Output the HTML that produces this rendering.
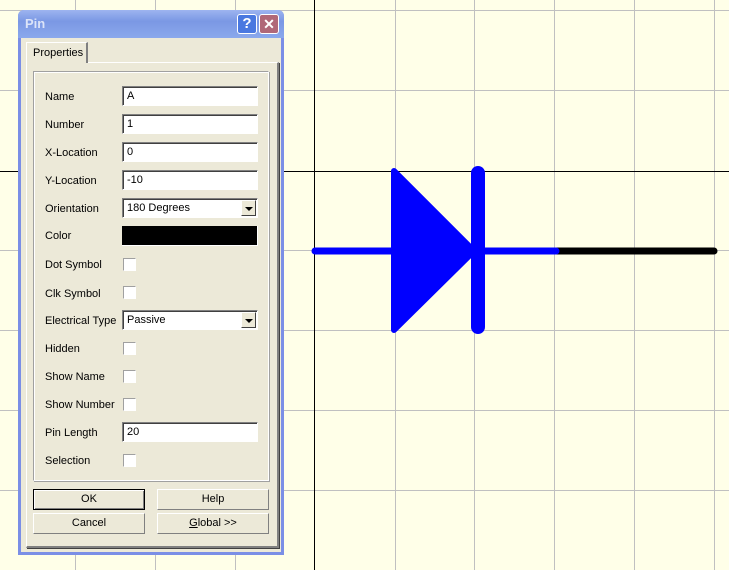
<!DOCTYPE html><html><head><style>
body{margin:0;width:729px;height:570px;overflow:hidden;background:#ffffe8;position:relative;font-family:"Liberation Sans",Arial,sans-serif;font-size:11px;color:#000}
.a{position:absolute}
.lbl{position:absolute;left:45px;font-size:11px}
.in{position:absolute;left:122px;width:134px;height:18px;background:#fff;border-top:1px solid #808080;border-left:1px solid #808080;border-right:1px solid #fff;border-bottom:1px solid #fff;box-shadow:inset 1px 1px 0 #404040}
.in span{position:absolute;left:4px;top:3px}
.cb{position:absolute;left:123px;width:11px;height:11px;background:#fff;border:1px solid #a0a0a0;border-right-color:#fff;border-bottom-color:#fff}
.dd{position:absolute;right:1px;top:1px;width:15px;height:16px;background:#ece9d8;border:1px solid #fff;border-right-color:#404040;border-bottom-color:#404040;box-sizing:border-box}
.dd:after{content:"";position:absolute;left:3px;top:6px;border-left:4px solid transparent;border-right:4px solid transparent;border-top:4px solid #000}
.btn{position:absolute;width:112px;height:21px;background:#ece9d8;border:1px solid #fff;border-right-color:#808080;border-bottom-color:#808080;text-align:center;line-height:19px;box-sizing:border-box}
</style></head><body>
<svg class="a" style="left:0;top:0" width="729" height="570">
<g stroke="#c0c0c0" stroke-width="1">
<line x1="75.5" y1="0" x2="75.5" y2="570"/><line x1="155.5" y1="0" x2="155.5" y2="570"/><line x1="235.5" y1="0" x2="235.5" y2="570"/><line x1="395.5" y1="0" x2="395.5" y2="570"/><line x1="474.5" y1="0" x2="474.5" y2="570"/><line x1="554.5" y1="0" x2="554.5" y2="570"/><line x1="634.5" y1="0" x2="634.5" y2="570"/><line x1="714.5" y1="0" x2="714.5" y2="570"/>
<line x1="0" y1="10.5" x2="729" y2="10.5"/><line x1="0" y1="90.5" x2="729" y2="90.5"/><line x1="0" y1="250.5" x2="729" y2="250.5"/><line x1="0" y1="330.5" x2="729" y2="330.5"/><line x1="0" y1="410.5" x2="729" y2="410.5"/><line x1="0" y1="490.5" x2="729" y2="490.5"/>
</g>
<line x1="314.5" y1="0" x2="314.5" y2="570" stroke="#000"/>
<line x1="0" y1="171.5" x2="729" y2="171.5" stroke="#000"/>
<line x1="556" y1="251" x2="714" y2="251" stroke="#000" stroke-width="7" stroke-linecap="round"/>
<line x1="315" y1="251" x2="556" y2="251" stroke="#00f" stroke-width="7" stroke-linecap="round"/>
<polygon points="394,171 474,251 394,330" fill="#00f" stroke="#00f" stroke-width="6" stroke-linejoin="round"/>
<line x1="478" y1="173" x2="478" y2="327" stroke="#00f" stroke-width="14" stroke-linecap="round"/>
</svg>
<div class="a" style="left:18px;top:10px;width:266px;height:545px;background:#7b8fe6;border-radius:6px 6px 0 0"></div>
<div class="a" style="left:18px;top:10px;width:266px;height:28px;background:linear-gradient(#9db4f0,#7b98e4 40%,#8aa8ec);border-radius:6px 6px 0 0"></div>
<div class="a" style="left:25px;top:16px;color:#dce4f8;font-weight:bold;font-size:13px">Pin</div>
<div class="a" style="left:237px;top:14px;width:20px;height:20px;background:#4a78e0;border:1px solid #fff;border-radius:3px;box-sizing:border-box;color:#fff;font-weight:bold;text-align:center;line-height:18px;font-size:15px">?</div>
<div class="a" style="left:259px;top:14px;width:20px;height:20px;background:#b06878;border:1px solid #fff;border-radius:3px;box-sizing:border-box;color:#fff;font-weight:bold;text-align:center;line-height:18px;font-size:14px">✕</div>
<div class="a" style="left:21px;top:38px;width:260px;height:514px;background:#ece9d8"></div>
<div class="a" style="left:26px;top:62px;width:253px;height:486px;border:1px solid #fff;border-right:2px solid #808080;border-bottom:2px solid #808080;box-sizing:border-box;box-shadow:1px 1px 0 #404040"></div>
<div class="a" style="left:26px;top:42px;width:62px;height:21px;background:#ece9d8;border:1px solid #fff;border-right:2px solid #808080;border-bottom:none;box-sizing:border-box;padding:4px 0 0 6px">Properties</div>
<div class="a" style="left:33px;top:71px;width:236px;height:410px;border:1px solid #a0a0a0;border-right-color:#fff;border-bottom-color:#fff;box-sizing:border-box;box-shadow:1px 1px 0 #a0a0a0,inset 1px 1px 0 #fff"></div>
<div class="lbl" style="top:91px">Name</div><div class="in" style="top:86px"><span>A</span></div>
<div class="lbl" style="top:119px">Number</div><div class="in" style="top:114px"><span>1</span></div>
<div class="lbl" style="top:147px">X-Location</div><div class="in" style="top:142px"><span>0</span></div>
<div class="lbl" style="top:175px">Y-Location</div><div class="in" style="top:170px"><span>-10</span></div>
<div class="lbl" style="top:203px">Orientation</div><div class="in" style="top:198px"><span>180 Degrees</span><div class="dd"></div></div>
<div class="lbl" style="top:230px">Color</div><div class="a" style="left:122px;top:226px;width:136px;height:20px;background:#000;border-bottom:1px solid #fff;border-right:1px solid #fff;box-sizing:border-box"></div>
<div class="lbl" style="top:259px">Dot Symbol</div><div class="cb" style="top:258px"></div>
<div class="lbl" style="top:288px">Clk Symbol</div><div class="cb" style="top:286px"></div>
<div class="lbl" style="top:315px">Electrical Type</div><div class="in" style="top:310px"><span>Passive</span><div class="dd"></div></div>
<div class="lbl" style="top:343px">Hidden</div><div class="cb" style="top:342px"></div>
<div class="lbl" style="top:371px">Show Name</div><div class="cb" style="top:370px"></div>
<div class="lbl" style="top:399px">Show Number</div><div class="cb" style="top:398px"></div>
<div class="lbl" style="top:427px">Pin Length</div><div class="in" style="top:422px"><span>20</span></div>
<div class="lbl" style="top:455px">Selection</div><div class="cb" style="top:454px"></div>
<div class="btn" style="left:33px;top:489px;border:1px solid #000;box-shadow:inset 1px 1px 0 #fff,inset -1px -1px 0 #808080">OK</div>
<div class="btn" style="left:157px;top:489px">Help</div>
<div class="btn" style="left:33px;top:513px">Cancel</div>
<div class="btn" style="left:157px;top:513px"><u>G</u>lobal &gt;&gt;</div>
</body></html>
